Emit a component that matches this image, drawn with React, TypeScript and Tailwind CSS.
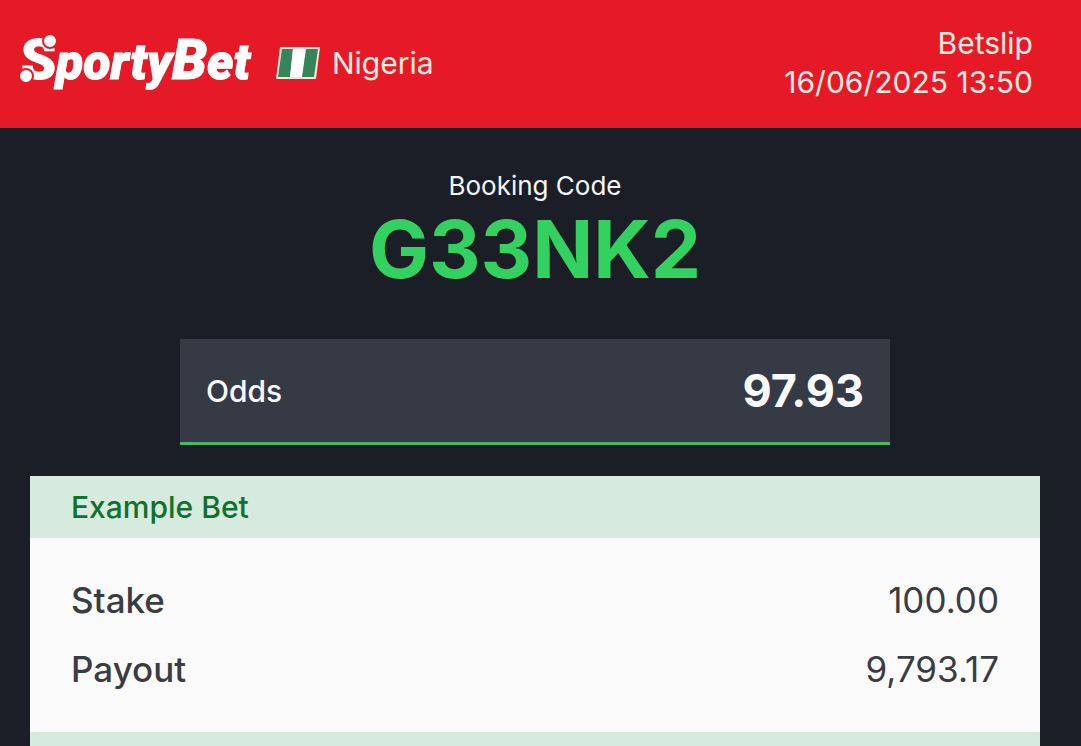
import React from 'react';

interface BetRow {
  label: string;
  value: string;
}

const betRows: BetRow[] = [
  { label: 'Stake', value: '100.00' },
  { label: 'Payout', value: '9,793.17' },
];

const Logo: React.FC = () => (
  <svg
    viewBox="0 0 236 84"
    className="h-[84px] w-[236px] shrink-0 fill-white font-['Roboto','Liberation_Sans',sans-serif] font-black"
    role="img"
    aria-label="SportyBet"
  >
    <text x="1" y="58" fontSize="50" fontStyle="italic" stroke="#fff" strokeWidth="1">
      <tspan fontSize="56" fontStyle="normal">S</tspan>
      porty
      <tspan fontSize="56">B</tspan>
      et
    </text>
    {/* ball dots at both ends of the S, ringed in the header colour */}
    <g stroke="#e61a27" strokeWidth="2">
      <circle cx="30" cy="20" r="7" />
      <circle cx="6" cy="55" r="7" />
    </g>
  </svg>
);

const NigeriaFlag: React.FC = () => (
  <svg viewBox="0 0 44 32" className="h-8 w-11 shrink-0" aria-hidden="true">
    <path d="M4 0H44L40 32H0Z" fill="#f6e6d8" />
    <path d="M6 2H17L14 30H2Z" fill="#35845a" />
    <path d="M17 2H30L26 30H14Z" fill="#fff" />
    <path d="M30 2H42L38 30H26Z" fill="#35845a" />
  </svg>
);

const Header: React.FC = () => (
  <header className="flex h-32 items-center justify-between bg-[#e61a27] pb-[3px] pl-5 pr-12 text-white">
    <div className="flex items-center">
      <Logo />
      <div className="ml-5 flex items-center gap-3">
        <NigeriaFlag />
        <span className="text-[30px] leading-10 text-[#ffece0]">Nigeria</span>
      </div>
    </div>
    <div className="text-right text-[30px] leading-[39px] text-[#ffece0]">
      <p>Betslip</p>
      <p>16/06/2025 13:50</p>
    </div>
  </header>
);

const App: React.FC = () => {
  return (
    <div className="flex min-h-screen flex-col bg-[#1b1e27] font-['Inter','Liberation_Sans',sans-serif]">
      <Header />

      <main className="flex flex-1 flex-col pl-[30px] pr-[41px]">
        {/* Booking code */}
        <section className="pt-[38px] text-center">
          <h2 className="text-[26px] leading-10 text-[#f4f6fa]">Booking Code</h2>
          <p className="text-[80px] font-bold leading-[86px] text-[#33d160]">G33NK2</p>
        </section>

        {/* Total odds */}
        <section className="mx-[150px] mt-[47px] flex h-[106px] items-center justify-between border-b-3 border-[#46b868] bg-[#363a44] px-[26px] text-[#f8f9fd]">
          <span className="text-[30px] font-medium leading-10">Odds</span>
          <span className="text-[45px] font-bold leading-[48px]">97.93</span>
        </section>

        {/* Example bet */}
        <section className="mt-[31px] flex flex-1 flex-col">
          <h3 className="bg-[#d6eadd] px-[41px] py-[11px] text-[30px] font-medium leading-10 text-[#10702f]">
            Example Bet
          </h3>
          <dl className="flex flex-col gap-[21px] bg-[#fafafa] px-[41px] pb-[39px] pt-[38px] text-[35px] leading-[48px] text-[#3a3c41]">
            {betRows.map((row) => (
              <div key={row.label} className="flex items-center justify-between">
                <dt className="font-medium">{row.label}</dt>
                <dd>{row.value}</dd>
              </div>
            ))}
          </dl>
          <div className="min-h-3 flex-1 bg-[#d6eadd]"></div>
        </section>
      </main>
    </div>
  );
};

export default App;
